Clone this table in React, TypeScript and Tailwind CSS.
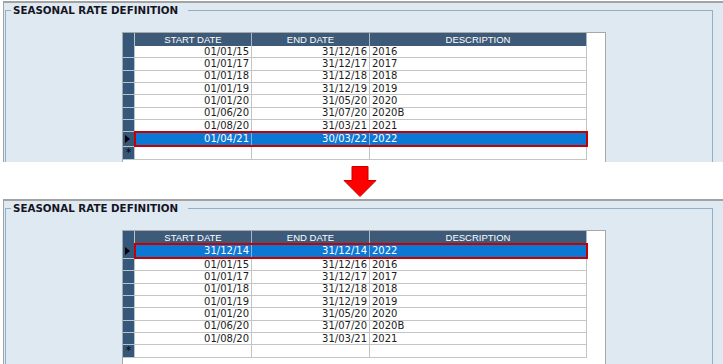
import React from 'react';

type Row = { start: string; end: string; desc: string; selected?: boolean };

const topRows: Row[] = [
	{ start: '01/01/15', end: '31/12/16', desc: '2016' },
	{ start: '01/01/17', end: '31/12/17', desc: '2017' },
	{ start: '01/01/18', end: '31/12/18', desc: '2018' },
	{ start: '01/01/19', end: '31/12/19', desc: '2019' },
	{ start: '01/01/20', end: '31/05/20', desc: '2020' },
	{ start: '01/06/20', end: '31/07/20', desc: '2020B' },
	{ start: '01/08/20', end: '31/03/21', desc: '2021' },
	{ start: '01/04/21', end: '30/03/22', desc: '2022', selected: true },
];

const bottomRows: Row[] = [
	{ start: '31/12/14', end: '31/12/14', desc: '2022', selected: true },
	...topRows.slice(0, 7),
];

const dataFont = { fontFamily: '"DejaVu Sans", Verdana, sans-serif' };

const GridRow = ({ row }: { row: Row }) => {
	const sel = row.selected;
	return (
		<div className={`relative flex ${sel ? 'h-[15px]' : 'h-[12.33px]'}`}>
			{/* record selector */}
			<div className="w-[12px] shrink-0 flex items-center bg-[#35577a] border-b border-r border-[#b9c3cc]">
				{sel && <span className="ml-[2px] w-0 h-0 border-y-[4px] border-y-transparent border-l-[5px] border-l-black" />}
			</div>
			<div
				className={`flex w-[452px] text-[10px] leading-none items-center ${
					sel ? 'bg-[#0a78d4] text-white' : 'bg-white text-[#1c1c1c]'
				}`}
				style={dataFont}
			>
				<div className={`w-[117px] h-full flex items-center justify-end pr-[2px] border-r border-b ${sel ? 'border-[#7fb4e0]' : 'border-[#c4c4c4]'}`}>
					{row.start}
				</div>
				<div className={`w-[118px] h-full flex items-center justify-end pr-[2px] border-r border-b ${sel ? 'border-[#7fb4e0]' : 'border-[#c4c4c4]'}`}>
					{row.end}
				</div>
				<div className={`w-[217px] h-full flex items-center pl-[2px] border-r border-b ${sel ? 'border-[#7fb4e0]' : 'border-[#c4c4c4]'}`}>
					{row.desc}
				</div>
			</div>
			{sel && <span className="absolute -top-[1px] bottom-0 left-[11px] w-[454px] border-2 border-[#c40000] pointer-events-none" />}
		</div>
	);
};

const NewRow = () => (
	<div className="flex h-[12.33px]">
		<div className="w-[12px] shrink-0 flex items-center justify-center bg-[#35577a] border-b border-r border-[#b9c3cc] text-[11px] leading-none text-black" style={dataFont}>
			*
		</div>
		<div className="flex w-[452px] bg-white">
			<div className="w-[117px] h-full border-r border-b border-[#c4c4c4]" />
			<div className="w-[118px] h-full border-r border-b border-[#c4c4c4]" />
			<div className="w-[217px] h-full border-r border-b border-[#c4c4c4]" />
		</div>
	</div>
);

const Panel = ({ rows, className }: { rows: Row[]; className: string }) => (
	<div className={`ml-[3px] border-t-2 border-l border-[#a3a3a3] bg-[#dfe9f2] overflow-hidden ${className}`}>
		<div className="relative ml-[1px] mt-[7px] w-[708px] h-[400px] border-t border-l border-r border-[#93afc8]">
			<span
				className="absolute left-[5px] -top-[7px] pl-[2px] pr-[10px] bg-[#dfe9f2] text-[10.3px] font-bold leading-[13px] text-[#15151f]"
				style={dataFont}
			>
				SEASONAL RATE DEFINITION
			</span>
			<div className="ml-[116px] mt-[21px] w-[484px] h-[300px] bg-white border border-[#a8a8a8]">
				<div className="flex h-[13px] text-[9.5px] leading-none text-white" style={{ fontFamily: '"Liberation Sans", Arial, sans-serif' }}>
					<div className="w-[12px] bg-[#35577a] border-r border-[#b9c3cc]" />
					<div className="w-[117px] flex items-center justify-center bg-[#3d5a79] border-r border-[#a9b6c3]">START DATE</div>
					<div className="w-[118px] flex items-center justify-center bg-[#3d5a79] border-r border-[#a9b6c3]">END DATE</div>
					<div className="w-[217px] flex items-center justify-center bg-[#3d5a79] border-r border-[#a9b6c3]">DESCRIPTION</div>
				</div>
				{rows.map((r, i) => (
					<GridRow key={i} row={r} />
				))}
				<NewRow />
			</div>
		</div>
	</div>
);

export default function App() {
	return (
		<div className="w-[723px] h-[364px] bg-white overflow-hidden">
			<Panel rows={topRows} className="mt-[1px] h-[161px]" />
			<div className="h-[37px] pl-[343px] pt-[4px]">
				<svg width="34" height="32" viewBox="0 0 34 32">
					<path d="M9 0.5 H25 V14.5 H33 L17 30.5 L1 14.5 H9 Z" fill="#ff0000" stroke="#c80000" strokeWidth="1" />
				</svg>
			</div>
			<Panel rows={bottomRows} className="h-[165px]" />
		</div>
	);
}
